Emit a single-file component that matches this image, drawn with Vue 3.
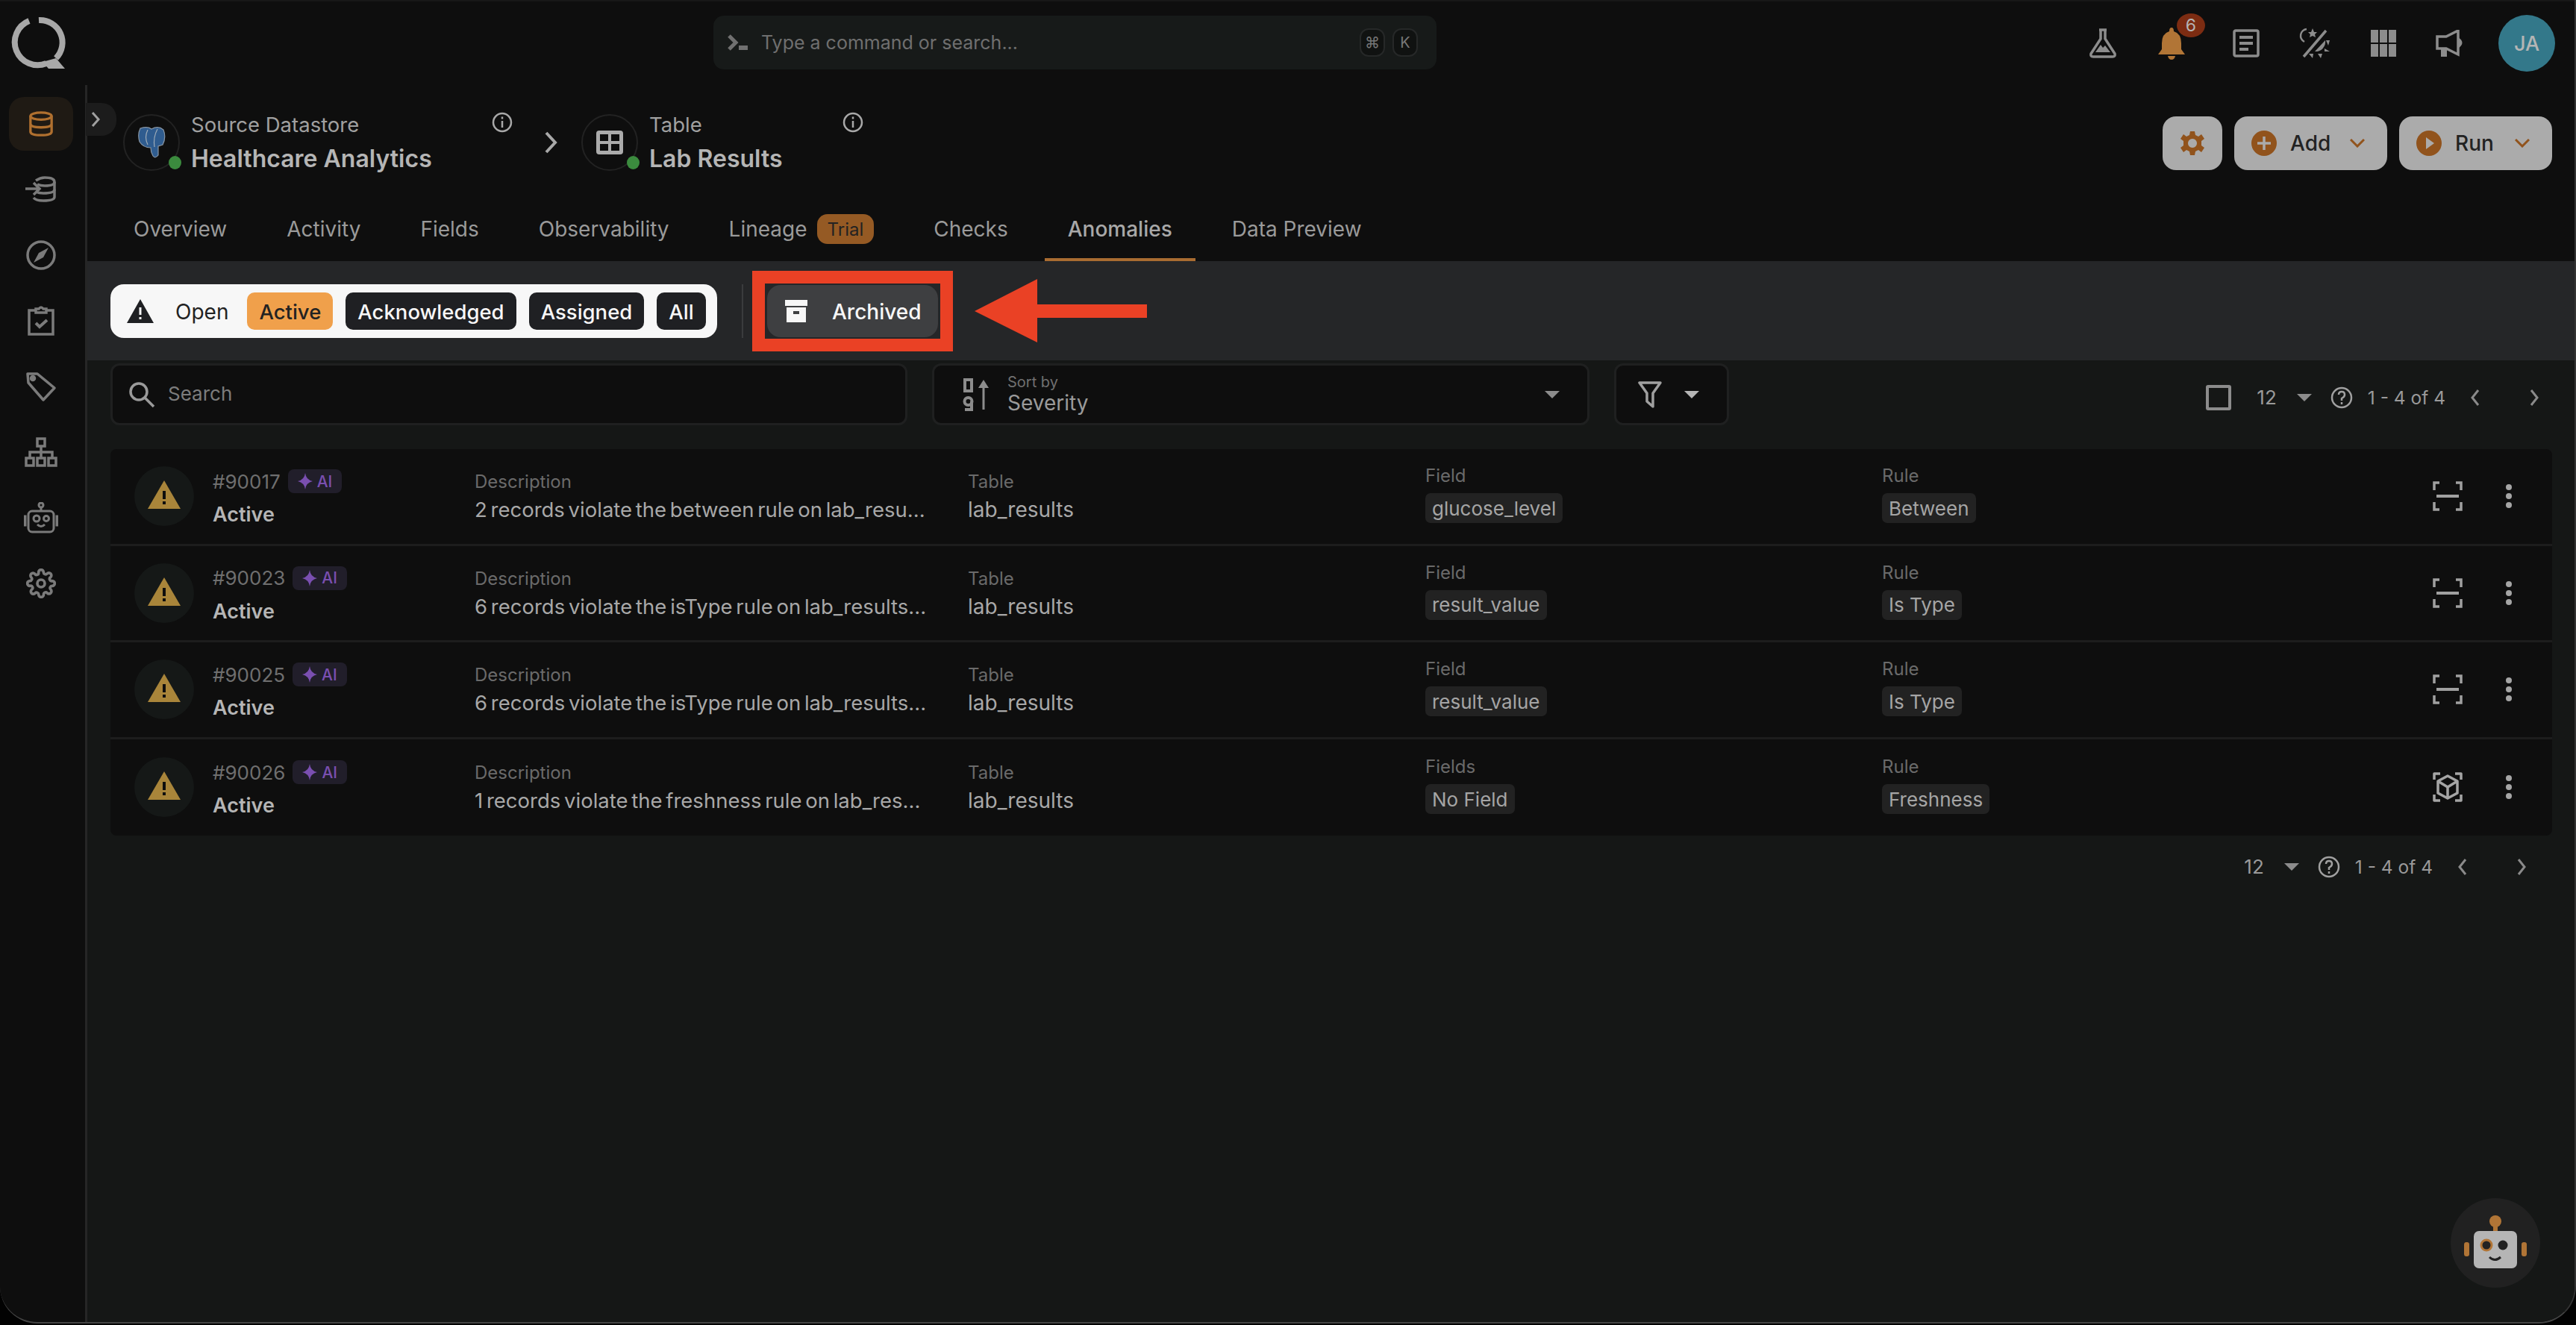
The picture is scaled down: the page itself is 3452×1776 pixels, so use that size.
<script setup>
const navIcons = [
  { id: 'store', active: true },
  { id: 'ingest' },
  { id: 'compass' },
  { id: 'clipboard' },
  { id: 'tag' },
  { id: 'tree' },
  { id: 'bot' },
  { id: 'gear' },
]

const tabs = [
  { label: 'Overview' },
  { label: 'Activity' },
  { label: 'Fields' },
  { label: 'Observability' },
  { label: 'Lineage', badge: 'Trial' },
  { label: 'Checks' },
  { label: 'Anomalies', active: true },
  { label: 'Data Preview' },
]

const anomalies = [
  { id: '#90017', desc: '2 records violate the between rule on lab_resu...', fieldLabel: 'Field', field: 'glucose_level', rule: 'Between', icon: 'scan' },
  { id: '#90023', desc: '6 records violate the isType rule on lab_results...', fieldLabel: 'Field', field: 'result_value', rule: 'Is Type', icon: 'scan' },
  { id: '#90025', desc: '6 records violate the isType rule on lab_results...', fieldLabel: 'Field', field: 'result_value', rule: 'Is Type', icon: 'scan' },
  { id: '#90026', desc: '1 records violate the freshness rule on lab_res...', fieldLabel: 'Fields', field: 'No Field', rule: 'Freshness', icon: 'cube' },
]
</script>

<template>
  <div class="app">
    <header class="topbar">
      <div class="logo">
        <svg width="74" height="72" viewBox="0 0 74 72">
          <path d="M24 6 A30 30 0 1 0 47 63" fill="none" stroke="#a8a8a8" stroke-width="8" />
          <path d="M37 5 A30 30 0 0 1 60 56" fill="none" stroke="#a8a8a8" stroke-width="8" />
          <path d="M42 61 L60 56 L72 70 L50 70 Z" fill="#a8a8a8" />
        </svg>
      </div>
      <div class="command">
        <svg class="command-icon" width="30" height="24" viewBox="0 0 30 24">
          <path d="M3 3 L12 12 L3 21" fill="none" stroke="#707070" stroke-width="5" />
          <rect x="16" y="16" width="12" height="6" fill="#707070" />
        </svg>
        <span class="command-text">Type a command or search...</span>
        <span class="kbd">⌘</span>
        <span class="kbd">K</span>
      </div>
      <div class="top-icons">
        <svg width="40" height="42" viewBox="0 0 40 42">
          <path d="M15 3 H25 M17 3 V15 L4 35 Q3 39 7 39 H33 Q37 39 36 35 L23 15 V3" fill="none" stroke="#8c8c8c" stroke-width="3.5" />
          <path d="M10 33 L17 23 L20 27 L23 24 L30 33 Z" fill="#8c8c8c" />
        </svg>
        <div class="bell">
          <svg width="40" height="44" viewBox="0 0 40 44">
            <path d="M20 1 Q23 1 23 6 Q33 9 33 22 V30 L38 37 H2 L7 30 V22 Q7 9 17 6 Q17 1 20 1 Z" fill="#b17536" />
            <path d="M15 39 H25 Q24 44 20 44 Q16 44 15 39 Z" fill="#b17536" />
          </svg>
          <span class="bell-count">6</span>
        </div>
        <svg width="36" height="38" viewBox="0 0 36 38">
          <rect x="2" y="2" width="32" height="34" rx="2" fill="none" stroke="#8c8c8c" stroke-width="3.5" />
          <path d="M9 11 H27 M9 19 H27 M9 27 H21" stroke="#8c8c8c" stroke-width="4" />
        </svg>
        <svg width="44" height="44" viewBox="0 0 44 44">
          <path d="M11 3 A9 9 0 0 0 8 20" fill="none" stroke="#8c8c8c" stroke-width="2.5" />
          <path d="M19 2 L21 7 L25 7 L22 10 L23 14 L19 12 L15 14 L16 10 L13 7 L17 7 Z" fill="#8c8c8c" />
          <path d="M37 5 L7 40" stroke="#8c8c8c" stroke-width="3.5" />
          <path d="M36 18 A13 13 0 0 1 22 33 Z" fill="#8c8c8c" />
          <path d="M37 18 H42 L40 25 Z M35 29 L42 33 H35 Z M26 36 L32 36 L30 42 Z M14 36 H20 L19 42 Z" fill="#8c8c8c" />
        </svg>
        <svg width="36" height="38" viewBox="0 0 36 38" fill="#8c8c8c">
          <rect x="1" y="1" width="10" height="17" /><rect x="13" y="1" width="10" height="17" /><rect x="25" y="1" width="10" height="17" />
          <rect x="1" y="20" width="10" height="17" /><rect x="13" y="20" width="10" height="17" /><rect x="25" y="20" width="10" height="17" />
        </svg>
        <svg class="megaphone" width="42" height="36" viewBox="0 0 42 36">
          <path d="M2 9 H14 L30 1 V33 L14 25 H2 Z" fill="none" stroke="#8c8c8c" stroke-width="3.5" />
          <path d="M7 25 H15 V36 H7 Z M30 10 Q41 17 30 25 Z" fill="#8c8c8c" />
        </svg>
        <div class="avatar">JA</div>
      </div>
    </header>

    <div class="body">
      <nav class="sidebar">
        <div v-for="item in navIcons" :key="item.id" class="nav-item" :class="{ active: item.active }">
          <svg v-if="item.id === 'store'" width="34" height="36" viewBox="0 0 36 36" fill="none" stroke="#b0702f" stroke-width="3.5">
            <ellipse cx="18" cy="7" rx="15" ry="5" />
            <path d="M3 7 V29 Q3 34 18 34 Q33 34 33 29 V7 M3 18 Q3 23 18 23 Q33 23 33 18" />
          </svg>
          <svg v-else-if="item.id === 'ingest'" width="42" height="36" viewBox="0 0 42 36" fill="none" stroke="#7b7b7b" stroke-width="3.5">
            <path d="M14 6 Q20 2 26 2 Q39 2 39 8 Q39 13 26 13 Q20 13 16 11" />
            <path d="M39 8 V28 Q39 33 24 33 Q14 33 11 29" />
            <path d="M39 18 Q39 23 24 23 Q18 23 14 21" />
            <path d="M0 17 H18 M11 9 L19 17 L11 25" />
          </svg>
          <svg v-else-if="item.id === 'compass'" width="40" height="40" viewBox="0 0 40 40" fill="none" stroke="#7b7b7b" stroke-width="3.5">
            <circle cx="20" cy="20" r="18" />
            <path d="M30 10 L23 23 L10 30 L17 17 Z" fill="#7b7b7b" stroke="none" />
          </svg>
          <svg v-else-if="item.id === 'clipboard'" width="36" height="40" viewBox="0 0 36 40" fill="none" stroke="#7b7b7b" stroke-width="3.5">
            <path d="M11 6 H2 V38 H34 V6 H25 M11 9 V4 H15 Q18 0 21 4 H25 V9 Z" />
            <path d="M11 23 L16 28 L26 19" stroke-width="4" />
          </svg>
          <svg v-else-if="item.id === 'tag'" width="40" height="40" viewBox="0 0 40 40" fill="none" stroke="#7b7b7b" stroke-width="3.5">
            <path d="M2 3 H15 L38 22 L23 38 L3 15 Z" stroke-linejoin="round" />
            <circle cx="9" cy="9" r="2.5" fill="#7b7b7b" />
          </svg>
          <svg v-else-if="item.id === 'tree'" width="44" height="40" viewBox="0 0 44 40" fill="none" stroke="#7b7b7b" stroke-width="3.5">
            <rect x="17" y="2" width="10" height="10" />
            <rect x="2" y="28" width="10" height="10" />
            <rect x="17" y="28" width="10" height="10" />
            <rect x="32" y="28" width="10" height="10" />
            <path d="M22 12 V28 M7 28 V20 H37 V28" />
          </svg>
          <svg v-else-if="item.id === 'bot'" width="46" height="42" viewBox="0 0 46 42" fill="none" stroke="#7b7b7b" stroke-width="3">
            <circle cx="23" cy="4" r="3" />
            <path d="M23 7 V12" />
            <rect x="6" y="12" width="34" height="28" rx="5" />
            <circle cx="17" cy="22" r="4" />
            <circle cx="30" cy="22" r="3.5" />
            <path d="M18 30 Q23 35 28 30" />
            <rect x="0" y="19" width="2" height="12" fill="#7b7b7b" />
            <rect x="44" y="19" width="2" height="12" fill="#7b7b7b" />
          </svg>
          <svg v-else width="40" height="40" viewBox="0 0 24 24" fill="none" stroke="#7b7b7b" stroke-width="2.2">
            <circle cx="12" cy="12" r="3" />
            <path d="M19.4 15a1.65 1.65 0 0 0 .33 1.82l.06.06a2 2 0 1 1-2.83 2.83l-.06-.06a1.65 1.65 0 0 0-2.82 1.17V21a2 2 0 1 1-4 0v-.09a1.65 1.65 0 0 0-2.82-1.08l-.06.06a2 2 0 1 1-2.83-2.83l.06-.06A1.65 1.65 0 0 0 3.09 14H3a2 2 0 1 1 0-4h.09a1.65 1.65 0 0 0 1.08-2.82l-.06-.06a2 2 0 1 1 2.83-2.83l.06.06A1.65 1.65 0 0 0 10 3.09V3a2 2 0 1 1 4 0v.09a1.65 1.65 0 0 0 2.82 1.08l.06-.06a2 2 0 1 1 2.83 2.83l-.06.06A1.65 1.65 0 0 0 20.91 10H21a2 2 0 1 1 0 4h-.09a1.65 1.65 0 0 0-1.51 1z" />
          </svg>
        </div>
      </nav>

      <main class="main">
        <button class="collapse">
          <svg width="14" height="24" viewBox="0 0 14 24"><path d="M3 3 L11 12 L3 21" fill="none" stroke="#a0a0a0" stroke-width="3" /></svg>
        </button>

        <section class="page-head">
          <div class="crumbs">
            <div class="crumb crumb-source">
              <div class="crumb-circle">
                <svg width="38" height="42" viewBox="0 0 38 42">
                  <path d="M4 2 Q14 -1 19 3 Q28 -2 35 4 Q39 14 34 24 L28 26 V38 Q24 43 21 39 Q18 34 18 28 Q8 28 3 20 Q0 10 4 2 Z" fill="#2f5c8f" stroke="#8a97a5" stroke-width="1.2" />
                  <path d="M14 4 Q9 14 14 24 M27 3 Q21 14 23 27" fill="none" stroke="#a0adb8" stroke-width="1.2" />
                </svg>
                <span class="status-dot"></span>
              </div>
              <div class="crumb-text">
                <span class="crumb-label">Source Datastore</span>
                <span class="crumb-name">Healthcare Analytics</span>
              </div>
              <svg class="info" width="28" height="28" viewBox="0 0 28 28" fill="none" stroke="#a8a8a8" stroke-width="2.5">
                <circle cx="14" cy="14" r="12" />
                <path d="M14 12 V21 M14 6.5 V9.5" />
              </svg>
            </div>
            <svg class="crumb-sep" width="20" height="30" viewBox="0 0 20 30"><path d="M4 2 L16 15 L4 28" fill="none" stroke="#a8a8a8" stroke-width="4" /></svg>
            <div class="crumb crumb-table">
              <div class="crumb-circle">
                <svg width="36" height="32" viewBox="0 0 36 32">
                  <rect width="36" height="32" rx="4" fill="#ababab" />
                  <rect x="5" y="5" width="11" height="9" fill="#0e0e0e" /><rect x="20" y="5" width="11" height="9" fill="#0e0e0e" />
                  <rect x="5" y="18" width="11" height="9" fill="#0e0e0e" /><rect x="20" y="18" width="11" height="9" fill="#0e0e0e" />
                </svg>
                <span class="status-dot"></span>
              </div>
              <div class="crumb-text">
                <span class="crumb-label">Table</span>
                <span class="crumb-name">Lab Results</span>
              </div>
              <svg class="info" width="28" height="28" viewBox="0 0 28 28" fill="none" stroke="#a8a8a8" stroke-width="2.5">
                <circle cx="14" cy="14" r="12" />
                <path d="M14 12 V21 M14 6.5 V9.5" />
              </svg>
            </div>
          </div>
          <div class="head-actions">
            <button class="head-btn gear-btn">
              <svg width="34" height="34" viewBox="0 0 34 34">
                <path fill-rule="evenodd" fill="#91531c" d="M14 1 H20 L21 6 L25 8 L29 5 L33 11 L29 14 V20 L33 23 L29 29 L25 26 L21 28 L20 33 H14 L13 28 L9 26 L5 29 L1 23 L5 20 V14 L1 11 L5 5 L9 8 L13 6 Z M17 11 A6 6 0 1 0 17.01 11 Z" />
              </svg>
            </button>
            <button class="head-btn">
              <svg width="34" height="34" viewBox="0 0 34 34">
                <circle cx="17" cy="17" r="17" fill="#91531c" />
                <path d="M17 8 V26 M8 17 H26" stroke="#ababab" stroke-width="3.5" />
              </svg>
              <span>Add</span>
              <svg class="btn-caret" width="20" height="12" viewBox="0 0 20 12"><path d="M1 1 L10 10 L19 1" fill="none" stroke="#91531c" stroke-width="3" /></svg>
            </button>
            <button class="head-btn">
              <svg width="34" height="34" viewBox="0 0 34 34">
                <circle cx="17" cy="17" r="17" fill="#91531c" />
                <path d="M13 9 L24 17 L13 25 Z" fill="#ababab" />
              </svg>
              <span>Run</span>
              <svg class="btn-caret" width="20" height="12" viewBox="0 0 20 12"><path d="M1 1 L10 10 L19 1" fill="none" stroke="#91531c" stroke-width="3" /></svg>
            </button>
          </div>
        </section>

        <div class="tabs">
          <div v-for="tab in tabs" :key="tab.label" class="tab" :class="{ active: tab.active }">
            {{ tab.label }}
            <span v-if="tab.badge" class="tab-badge">{{ tab.badge }}</span>
          </div>
        </div>

        <section class="filter-band">
          <div class="status-pill">
            <svg class="pill-warn" width="36" height="32" viewBox="0 0 36 32">
              <path d="M18 0 L36 32 H0 Z" fill="#1f2023" />
              <rect x="16.5" y="11" width="3" height="10" fill="#f7f7f7" /><rect x="16.5" y="24" width="3" height="3" fill="#f7f7f7" />
            </svg>
            <span class="pill-open">Open</span>
            <span class="pill-tab on">Active</span>
            <span class="pill-tab">Acknowledged</span>
            <span class="pill-tab">Assigned</span>
            <span class="pill-tab">All</span>
          </div>
          <div class="band-sep"></div>
          <div class="highlight">
            <div class="archived-frame">
              <button class="archived">
                <svg width="30" height="30" viewBox="0 0 30 30">
                  <rect x="0" y="0" width="30" height="8" fill="#f7f7f7" />
                  <rect x="2" y="10" width="26" height="20" fill="#f7f7f7" />
                  <rect x="11" y="15" width="8" height="4" fill="#3e3f41" />
                </svg>
                <span class="archived-text">Archived</span>
              </button>
            </div>
          </div>
          <svg class="arrow" width="231" height="85" viewBox="0 0 231 85">
            <path d="M0 43 L84 0 V34 H231 V52 H84 V85 Z" fill="#ea4125" />
          </svg>
        </section>

        <section class="controls">
          <div class="search box">
            <svg width="38" height="38" viewBox="0 0 38 38" fill="none" stroke="#9a9a9a" stroke-width="3.5">
              <circle cx="15" cy="15" r="11" />
              <path d="M23 23 L35 35" />
            </svg>
            <span class="search-text">Search</span>
          </div>
          <div class="sort box">
            <svg width="38" height="44" viewBox="0 0 38 44" fill="none" stroke="#8c8c8c" stroke-width="3">
              <rect x="3" y="2" width="9" height="15" stroke-width="4" />
              <circle cx="7.5" cy="31" r="5" stroke-width="4" />
              <path d="M12 31 V42 H3" stroke-width="4" />
              <path d="M28 8 V42" />
              <path d="M21 13 L28 2 L35 13 Z" fill="#8c8c8c" stroke="none" />
            </svg>
            <div class="sort-text">
              <span class="sort-label">Sort by</span>
              <span class="sort-value">Severity</span>
            </div>
            <span class="caret"></span>
          </div>
          <div class="filter box">
            <svg width="32" height="36" viewBox="0 0 32 36"><path d="M2 2 H30 L20 16 V34 L12 27 V16 Z" fill="none" stroke="#a0a0a0" stroke-width="3.5" stroke-linejoin="round" /></svg>
            <span class="caret light"></span>
          </div>
          <div class="pager">
            <span class="check"></span>
            <span class="pager-size">12</span>
            <span class="caret small"></span>
            <svg class="help" width="32" height="32" viewBox="0 0 32 32" fill="none" stroke="#a0a0a0" stroke-width="2.5">
              <circle cx="16" cy="16" r="13" />
              <path d="M12 12 Q12 8 16 8 Q20 8 20 12 Q20 15 16 17 V20 M16 22 V25" />
            </svg>
            <span class="pager-range">1 - 4 of 4</span>
            <svg width="16" height="24" viewBox="0 0 16 24"><path d="M12 2 L4 12 L12 22" fill="none" stroke="#8a8a8a" stroke-width="3" /></svg>
            <svg class="pager-next" width="16" height="24" viewBox="0 0 16 24"><path d="M4 2 L12 12 L4 22" fill="none" stroke="#8a8a8a" stroke-width="3" /></svg>
          </div>
        </section>

        <section class="list">
          <article v-for="row in anomalies" :key="row.id" class="row">
            <div class="row-status">
              <div class="warn-circle">
                <svg width="44" height="38" viewBox="0 0 44 38">
                  <path d="M22 0 L44 38 H0 Z" fill="#a9853a" />
                  <rect x="20" y="14" width="4" height="11" fill="#0e0e0e" /><rect x="20" y="28" width="4" height="4" fill="#0e0e0e" />
                </svg>
              </div>
              <div class="row-id">
                <div class="row-id-top">
                  <span class="row-num">{{ row.id }}</span>
                  <span class="ai-badge">
                    <svg width="20" height="22" viewBox="0 0 20 22"><path d="M10 0 Q11 9 20 11 Q11 13 10 22 Q9 13 0 11 Q9 9 10 0 Z" fill="#7a4fb0" /></svg>
                    AI
                  </span>
                </div>
                <span class="row-state">Active</span>
              </div>
            </div>
            <div class="cell text-cell">
              <span class="cell-label">Description</span>
              <span class="cell-value desc">{{ row.desc }}</span>
            </div>
            <div class="cell text-cell">
              <span class="cell-label">Table</span>
              <span class="cell-value">lab_results</span>
            </div>
            <div class="cell tag-cell">
              <span class="cell-label">{{ row.fieldLabel }}</span>
              <span class="tag">{{ row.field }}</span>
            </div>
            <div class="cell tag-cell">
              <span class="cell-label">Rule</span>
              <span class="tag">{{ row.rule }}</span>
            </div>
            <div class="row-actions">
              <svg v-if="row.icon === 'scan'" width="40" height="40" viewBox="0 0 40 40" fill="none" stroke="#a0a0a0" stroke-width="3.5">
                <path d="M2 12 V2 H9 M31 2 H38 V12 M2 28 V38 H9 M31 38 H38 V28" />
                <path d="M5 20 H35" stroke-width="4" />
              </svg>
              <svg v-else width="40" height="40" viewBox="0 0 40 40" fill="none" stroke="#a5a5a5" stroke-width="3.5" stroke-linejoin="round">
                <path d="M2 10 V2 H10 M30 2 H38 V10 M2 30 V38 H10 M30 38 H38 V30" />
                <path d="M20 5 L33 12 V28 L20 35 L7 28 V12 Z M7 12 L20 20 L33 12 M20 20 V35" />
              </svg>
              <svg width="10" height="32" viewBox="0 0 10 32" fill="#a5a5a5">
                <circle cx="5" cy="4" r="4" /><circle cx="5" cy="16" r="4" /><circle cx="5" cy="28" r="4" />
              </svg>
            </div>
          </article>
        </section>

        <div class="pager pager-bottom">
          <span class="pager-size">12</span>
          <span class="caret small"></span>
          <svg class="help" width="32" height="32" viewBox="0 0 32 32" fill="none" stroke="#a0a0a0" stroke-width="2.5">
            <circle cx="16" cy="16" r="13" />
            <path d="M12 12 Q12 8 16 8 Q20 8 20 12 Q20 15 16 17 V20 M16 22 V25" />
          </svg>
          <span class="pager-range">1 - 4 of 4</span>
          <svg width="16" height="24" viewBox="0 0 16 24"><path d="M12 2 L4 12 L12 22" fill="none" stroke="#8a8a8a" stroke-width="3" /></svg>
          <svg class="pager-next" width="16" height="24" viewBox="0 0 16 24"><path d="M4 2 L12 12 L4 22" fill="none" stroke="#8a8a8a" stroke-width="3" /></svg>
        </div>

        <button class="bot-fab">
          <svg width="84" height="76" viewBox="0 0 84 76">
            <circle cx="42" cy="9" r="8" fill="#b17536" />
            <rect x="39" y="14" width="6" height="8" fill="#b17536" />
            <rect x="13" y="22" width="58" height="50" rx="7" fill="#b5b5b5" />
            <rect x="0" y="37" width="7" height="19" rx="3" fill="#b17536" />
            <rect x="77" y="37" width="7" height="19" rx="3" fill="#b17536" />
            <circle cx="30" cy="41" r="7" fill="#222" stroke="#b17536" stroke-width="3" />
            <circle cx="52" cy="41" r="6.5" fill="#222" />
            <path d="M34 57 Q41 64 49 57" fill="none" stroke="#222" stroke-width="3" />
          </svg>
        </button>
      </main>
    </div>
  </div>
</template>

<style>
html, body {
  margin: 0;
  background: #020202;
}
</style>

<style scoped>
.app {
  width: 3452px;
  height: 1774px;
  overflow: hidden;
  display: flex;
  flex-direction: column;
  background: #0e0e0e;
  border-right: 2px solid #333;
  border-bottom: 2px solid #444;
  border-radius: 0 0 50px 50px;
  box-sizing: border-box;
  font-family: Inter, "Liberation Sans", sans-serif;
  color: #a8a8a8;
}
button {
  font-family: inherit;
  border: none;
  cursor: pointer;
}

/* top bar */
.topbar {
  height: 114px;
  flex: none;
  display: flex;
  align-items: center;
  border-top: 2px solid #171717;
  box-sizing: border-box;
  position: relative;
}
.logo {
  width: 114px;
  padding-left: 15px;
  box-sizing: border-box;
  display: flex;
}
.command {
  margin-left: 842px;
  width: 969px;
  height: 72px;
  margin-top: -2px;
  background: #171a19;
  border-radius: 14px;
  display: flex;
  align-items: center;
  padding: 0 25px 0 18px;
  box-sizing: border-box;
}
.command-text {
  margin-left: 16px;
  margin-right: auto;
  font-size: 25px;
  color: #6f6f6f;
}
.kbd {
  width: 34px;
  height: 38px;
  margin-left: 10px;
  border: 2px solid #262828;
  border-radius: 12px;
  box-sizing: border-box;
  background: #101211;
  font-size: 20px;
  color: #777;
  display: flex;
  align-items: center;
  justify-content: center;
}
.top-icons {
  margin-left: auto;
  padding-right: 26px;
  display: flex;
  align-items: center;
  gap: 52px;
}
.bell {
  position: relative;
  display: flex;
  margin-right: 10px;
}
.bell-count {
  position: absolute;
  left: 27px;
  top: -18px;
  width: 38px;
  height: 32px;
  border-radius: 50%;
  background: #7c2c12;
  color: #b5b5b5;
  font-size: 23px;
  display: flex;
  align-items: center;
  justify-content: center;
}
.megaphone {
  margin-right: -10px;
}
.avatar {
  width: 76px;
  height: 76px;
  border-radius: 50%;
  background: #33788a;
  color: #b5b5b5;
  font-size: 27px;
  font-weight: 500;
  display: flex;
  align-items: center;
  justify-content: center;
}

/* sidebar */
.body {
  flex: 1;
  display: flex;
  min-height: 0;
}
.sidebar {
  width: 114px;
  flex: none;
  padding: 16px 4px 0 0;
  display: flex;
  flex-direction: column;
  align-items: center;
  gap: 16px;
  box-sizing: border-box;
}
.nav-item {
  width: 86px;
  height: 72px;
  border-radius: 20px;
  display: flex;
  align-items: center;
  justify-content: center;
}
.nav-item.active {
  background: #1f1a14;
}

/* main frame */
.main {
  flex: 1;
  position: relative;
  background: #151716;
  border-left: 3px solid #262626;
  box-sizing: border-box;
  min-width: 0;
}
.collapse {
  position: absolute;
  left: -2px;
  top: 24px;
  width: 41px;
  height: 44px;
  padding: 0 0 0 6px;
  background: #1c1c1c;
  border-radius: 0 20px 20px 0;
  display: flex;
  align-items: center;
  z-index: 1;
}
.page-head {
  height: 146px;
  background: #0e0e0e;
  display: flex;
  justify-content: space-between;
  padding: 0 30px 0 48px;
  box-sizing: border-box;
}
.crumbs {
  display: flex;
  align-items: center;
  padding-top: 7px;
}
.crumb {
  display: flex;
  align-items: center;
  position: relative;
}
.crumb-source {
  width: 563px;
}
.crumb-sep {
  margin-right: 31px;
}
.crumb-circle {
  width: 76px;
  height: 76px;
  border-radius: 50%;
  border: 2px solid #222;
  box-sizing: border-box;
  display: flex;
  align-items: center;
  justify-content: center;
  position: relative;
  margin-right: 15px;
  flex: none;
}
.status-dot {
  position: absolute;
  right: -4px;
  bottom: 0;
  width: 17px;
  height: 18px;
  border-radius: 50%;
  background: #3b8b3e;
}
.crumb-text {
  display: flex;
  flex-direction: column;
  gap: 10px;
}
.crumb-label {
  font-size: 27.5px;
  color: #a0a0a0;
  line-height: 34px;
}
.crumb-name {
  font-size: 32px;
  font-weight: 600;
  color: #b5b5b5;
  line-height: 38px;
  white-space: nowrap;
}
.info {
  position: absolute;
  top: 0;
}
.crumb-source .info {
  left: 494px;
}
.crumb-table .info {
  left: 350px;
}
.head-actions {
  display: flex;
  gap: 16px;
  padding-top: 42px;
}
.head-btn {
  height: 72px;
  width: 205px;
  background: #ababab;
  border-radius: 18px;
  color: #222;
  font-size: 28px;
  font-weight: 500;
  display: flex;
  align-items: center;
  padding: 0 30px 0 23px;
  box-sizing: border-box;
}
.head-btn span {
  margin-left: 18px;
}
.btn-caret {
  margin-left: auto;
}
.gear-btn {
  width: 80px;
  justify-content: center;
  padding: 0;
}

/* tabs */
.tabs {
  height: 90px;
  background: #0e0e0e;
  display: flex;
  padding-left: 22px;
  box-sizing: border-box;
}
.tab {
  padding: 4px 40px 0;
  height: 90px;
  box-sizing: border-box;
  font-size: 28px;
  color: #9a9a9a;
  display: flex;
  align-items: center;
  white-space: nowrap;
}
.tab.active {
  margin: 0 9px;
  padding: 8px 31px 0;
  border-bottom: 4px solid #a96c31;
  color: #a8a8a8;
  font-weight: 500;
}
.tab-badge {
  margin-left: 13px;
  height: 40px;
  padding: 0 14px;
  border-radius: 14px;
  background: #955a24;
  color: #222;
  font-size: 24px;
  display: flex;
  align-items: center;
}

/* status filter band */
.filter-band {
  height: 133px;
  background: #252628;
  display: flex;
  align-items: center;
  padding-left: 31px;
  box-sizing: border-box;
}
.status-pill {
  width: 813px;
  height: 72px;
  border-radius: 18px;
  background: #f7f7f7;
  display: flex;
  align-items: center;
  padding: 0 16px 0 22px;
  box-sizing: border-box;
  gap: 17px;
}
.pill-warn {
  flex: none;
}
.pill-open {
  margin: 3px 8px 0 12px;
  font-size: 28px;
  color: #222;
}
.pill-tab {
  height: 50px;
  padding: 3px 16px 0;
  box-sizing: border-box;
  border-radius: 10px;
  background: #1f2023;
  color: #f7f7f7;
  font-size: 27.5px;
  font-weight: 500;
  display: flex;
  align-items: center;
}
.pill-tab.on {
  background: #f0a04b;
  color: #222;
}
.band-sep {
  width: 2px;
  height: 72px;
  margin-left: 33px;
  background: #3a3b3d;
}
.highlight {
  margin-left: 12px;
  padding: 17px;
  background: #ea4125;
  display: flex;
}
.archived-frame {
  background: #252628;
  padding: 2px 3px;
  display: flex;
}
.archived {
  width: 229px;
  height: 70px;
  background: #3e3f41;
  border-radius: 18px;
  color: #f7f7f7;
  font-size: 28px;
  font-weight: 500;
  display: flex;
  align-items: center;
  gap: 33px;
  padding: 0 0 0 24px;
  box-sizing: border-box;
}
.archived-text {
  padding-top: 3px;
}
.arrow {
  margin-left: 29px;
}

/* search row */
.controls {
  height: 119px;
  display: flex;
  align-items: flex-start;
  padding: 4px 0 0 31px;
  box-sizing: border-box;
}
.box {
  height: 83px;
  background: #0e0e0e;
  border: 3px solid #1f2020;
  border-radius: 12px;
  box-sizing: border-box;
  display: flex;
  align-items: center;
}
.search {
  width: 1068px;
  padding-left: 20px;
  gap: 16px;
  font-size: 26px;
  color: #7c7c7c;
}
.search-text {
  margin-top: -3px;
}
.sort {
  width: 881px;
  margin-left: 33px;
  padding: 0 37px 0 38px;
  gap: 22px;
}
.sort-text {
  display: flex;
  flex-direction: column;
  margin-right: auto;
}
.sort-label {
  font-size: 20px;
  line-height: 22px;
  color: #707070;
}
.sort-value {
  font-size: 28px;
  line-height: 34px;
  color: #9a9a9a;
}
.caret {
  width: 0;
  height: 0;
  border-left: 10px solid transparent;
  border-right: 10px solid transparent;
  border-top: 10px solid #8c8c8c;
}
.caret.light {
  border-top-color: #b5b5b5;
}
.caret.small {
  margin-right: 24px;
}
.filter {
  width: 154px;
  margin-left: 33px;
  padding-left: 29px;
  gap: 30px;
}
.pager {
  margin-left: auto;
  height: 83px;
  display: flex;
  align-items: center;
  padding-right: 46px;
  font-size: 26px;
  color: #9a9a9a;
}
.controls .pager {
  padding-top: 4px;
}
.check {
  width: 34px;
  height: 34px;
  border: 4px solid #8c8c8c;
  border-radius: 3px;
  box-sizing: border-box;
  margin-right: 34px;
}
.pager-size {
  margin-right: 27px;
}
.help {
  margin-right: 19px;
}
.pager-range {
  font-size: 24.5px;
  margin-right: 32px;
  white-space: nowrap;
}
.pager-next {
  margin-left: 63px;
}

/* anomaly rows */
.list {
  margin-left: 31px;
  margin-right: 30px;
  background: #0e0e0e;
  border-radius: 8px;
}
.row {
  height: 129.5px;
  display: grid;
  grid-template-columns: 456px 661px 613px 612px 1fr 160px;
  align-items: center;
  padding-left: 32px;
  box-sizing: border-box;
  border-bottom: 3px solid #1d1d1d;
}
.row:last-child {
  border-bottom: none;
}
.row-status {
  display: flex;
  align-items: center;
  gap: 25px;
}
.warn-circle {
  width: 80px;
  height: 80px;
  border-radius: 50%;
  background: #151817;
  display: flex;
  align-items: center;
  justify-content: center;
  padding-bottom: 4px;
  box-sizing: border-box;
}
.row-id {
  display: flex;
  flex-direction: column;
  gap: 12px;
  padding-top: 6px;
}
.row-id-top {
  display: flex;
  align-items: center;
  gap: 10px;
}
.row-num {
  font-size: 26px;
  color: #6f6f6f;
}
.ai-badge {
  height: 32px;
  padding: 0 13px;
  border-radius: 8px;
  background: #211e2a;
  color: #7a4fb0;
  font-size: 21px;
  font-weight: 500;
  display: flex;
  align-items: center;
  gap: 6px;
}
.row-state {
  font-size: 27px;
  font-weight: 600;
  line-height: 34px;
  color: #b5b5b5;
}
.cell {
  display: flex;
  flex-direction: column;
  min-width: 0;
}
.text-cell {
  gap: 4px;
  padding-top: 2px;
}
.cell-label {
  font-size: 24px;
  line-height: 30px;
  color: #6a6a6a;
}
.cell-value {
  font-size: 28px;
  line-height: 36px;
  color: #a8a8a8;
  white-space: nowrap;
}
.cell-value.desc {
  font-size: 27.5px;
  word-spacing: -3px;
}
.tag-cell {
  align-items: flex-start;
  gap: 8px;
  padding-bottom: 6px;
}
.tag {
  height: 40px;
  padding: 0 9px;
  border-radius: 7px;
  background: #222;
  font-size: 26px;
  color: #a5a5a5;
  display: flex;
  align-items: center;
}
.row-actions {
  display: flex;
  align-items: center;
  gap: 57px;
  justify-self: end;
  padding-right: 53px;
}

/* bottom */
.pager-bottom {
  padding-right: 63px;
  justify-content: flex-end;
}
.bot-fab {
  position: absolute;
  right: 46px;
  bottom: 46px;
  width: 120px;
  height: 120px;
  border-radius: 50%;
  background: #212121;
  padding: 0;
  display: flex;
  align-items: center;
  justify-content: center;
}
</style>
